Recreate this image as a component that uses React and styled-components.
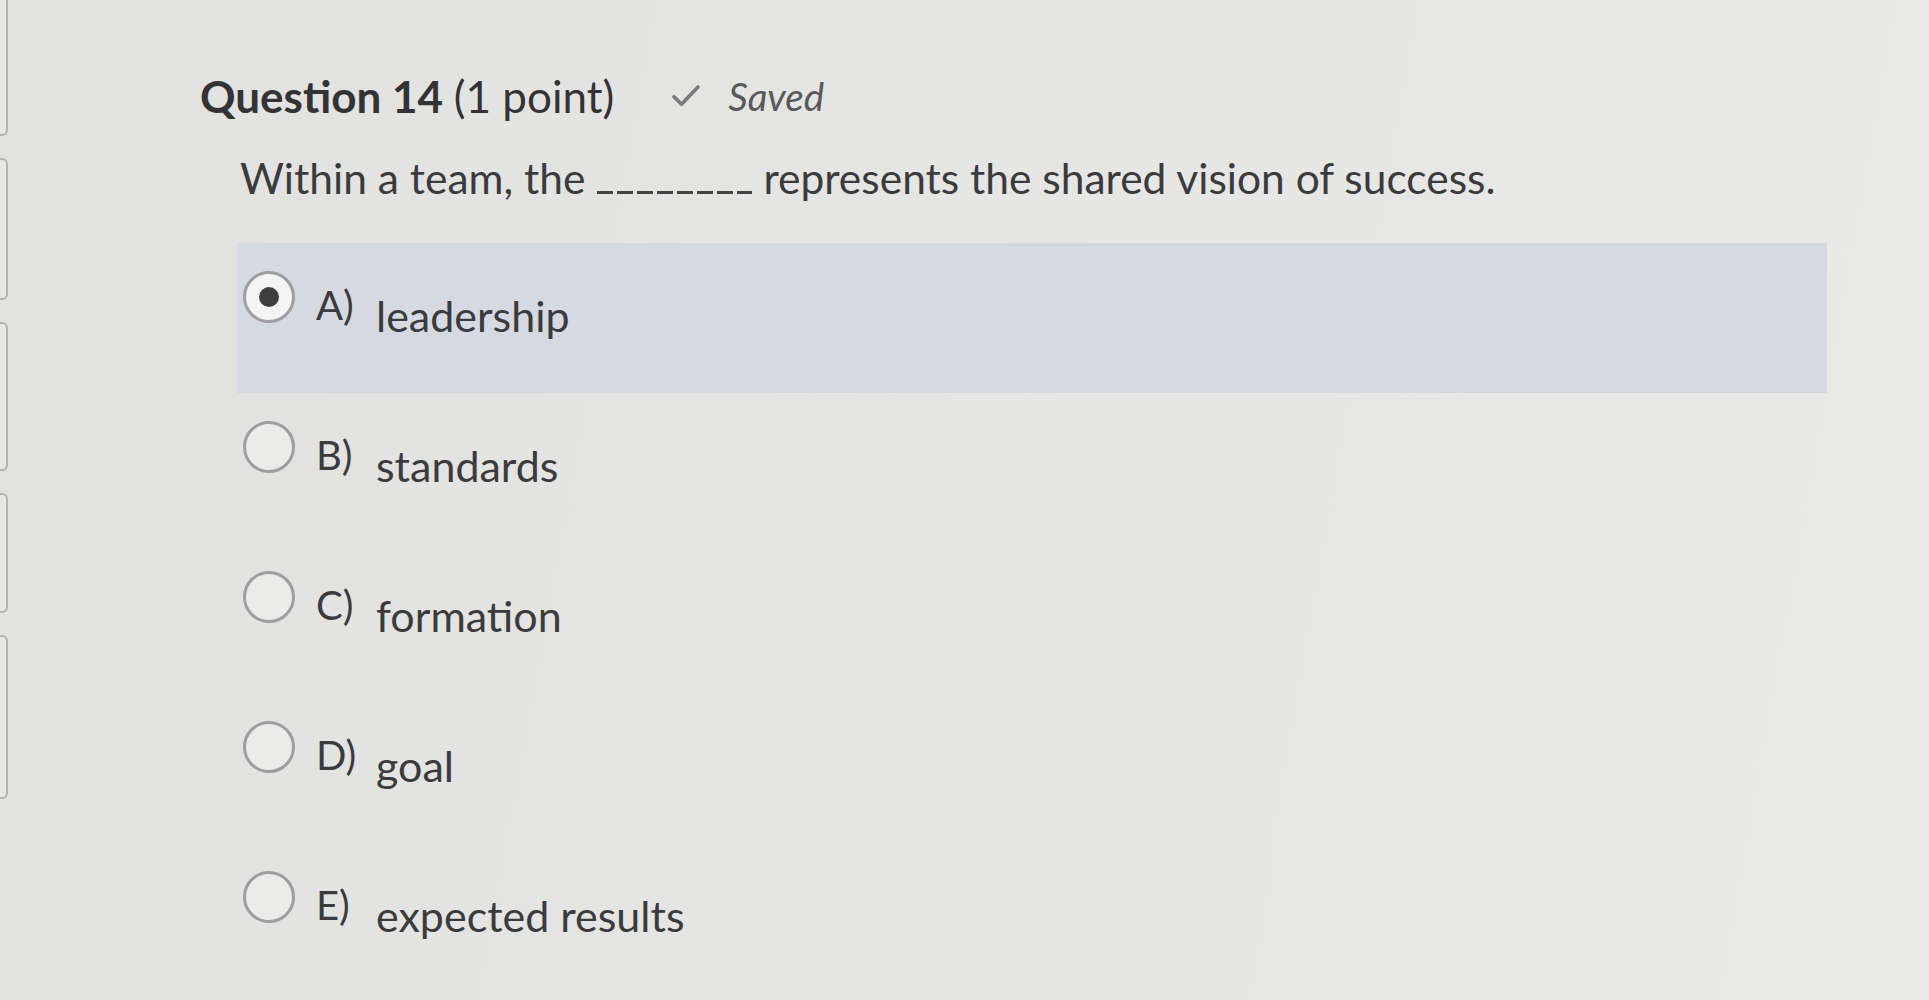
import React from 'react';
import styled, { createGlobalStyle } from 'styled-components';

const GlobalStyle = createGlobalStyle`
  html, body {
    margin: 0;
    padding: 0;
    background: #e4e4e2;
  }
  body {
    font-family: Lato, "Open Sans", sans-serif;
    color: #3b3b3d;
  }
`;

const Page = styled.div`
  display: flex;
  width: 1929px;
  height: 1000px;
  overflow: hidden;
  background: linear-gradient(100deg, #e1e1df 0%, #e6e6e4 55%, #e9e9e7 100%);
`;

const Rail = styled.div`
  display: flex;
  flex-direction: column;
  gap: 22px;
  width: 8px;
  margin-top: -10px;
`;

const Tab = styled.div`
  height: ${(p) => p.h}px;
  border: 2px solid #b3b3b1;
  border-left: none;
  border-radius: 0 6px 6px 0;
  background: #e7e7e5;
`;

const Content = styled.div`
  flex: 1;
  padding: 68px 0 0 192px;
`;

const Header = styled.div`
  display: flex;
  align-items: center;
  height: 56px;
`;

const Title = styled.h2`
  margin: 0;
  font-size: 44px;
  font-weight: 700;
  color: #333335;
  span {
    font-weight: 400;
  }
`;

const Saved = styled.div`
  display: flex;
  align-items: center;
  gap: 24px;
  margin-left: 54px;
  font-size: 38.5px;
  font-style: italic;
  color: #59595b;
`;

const Prompt = styled.p`
  margin: 28px 0 0 40px;
  font-size: 42.5px;
  color: #3b3b3d;
`;

const Blank = styled.span`
  display: inline-block;
  width: 155px;
  height: 3px;
  margin: 0 11px 0 12px;
  vertical-align: baseline;
  background: repeating-linear-gradient(90deg, #444 0 16px, transparent 16px 20px);
`;

const Options = styled.div`
  margin: 40px 0 0 37px;
  width: 1590px;
`;

const Option = styled.div`
  display: flex;
  align-items: flex-start;
  height: 150px;
  padding: 28px 0 0 6px;
  box-sizing: border-box;
  background: ${(p) => (p.selected ? '#d5d9e1' : 'transparent')};
`;

const Radio = styled.div`
  flex: none;
  display: flex;
  align-items: center;
  justify-content: center;
  width: 52px;
  height: 52px;
  border-radius: 50%;
  border: 3px solid #9e9ea0;
  box-sizing: border-box;
  background: ${(p) => (p.selected ? '#f4f4f4' : '#ebebe9')};
`;

const Dot = styled.div`
  width: 20px;
  height: 20px;
  border-radius: 50%;
  background: #3f3f41;
`;

const Letter = styled.span`
  margin: 10px 0 0 21px;
  width: 60px;
  font-size: 40px;
  color: #3b3b3d;
`;

const Answer = styled.span`
  margin-top: 19px;
  font-size: 43px;
  color: #3b3b3d;
`;

const options = [
  { letter: 'A)', text: 'leadership', selected: true },
  { letter: 'B)', text: 'standards' },
  { letter: 'C)', text: 'formation' },
  { letter: 'D)', text: 'goal' },
  { letter: 'E)', text: 'expected results' },
];

export default function App() {
  return (
    <>
      <GlobalStyle />
      <Page>
        <Rail>
          <Tab h={142} />
          <Tab h={138} />
          <Tab h={145} />
          <Tab h={116} />
          <Tab h={160} />
        </Rail>
        <Content>
          <Header>
            <Title>
              Question 14 <span>(1 point)</span>
            </Title>
            <Saved>
              <svg width="36" height="36" viewBox="0 0 24 24" fill="none" stroke="#7a7a7c" strokeWidth="2.4" strokeLinecap="round" strokeLinejoin="round">
                <path d="M4 12.5l5 5L20 6" />
              </svg>
              Saved
            </Saved>
          </Header>
          <Prompt>
            Within a team, the<Blank />represents the shared vision of success.
          </Prompt>
          <Options>
            {options.map((o) => (
              <Option key={o.letter} selected={o.selected}>
                <Radio selected={o.selected}>{o.selected && <Dot />}</Radio>
                <Letter>{o.letter}</Letter>
                <Answer>{o.text}</Answer>
              </Option>
            ))}
          </Options>
        </Content>
      </Page>
    </>
  );
}
